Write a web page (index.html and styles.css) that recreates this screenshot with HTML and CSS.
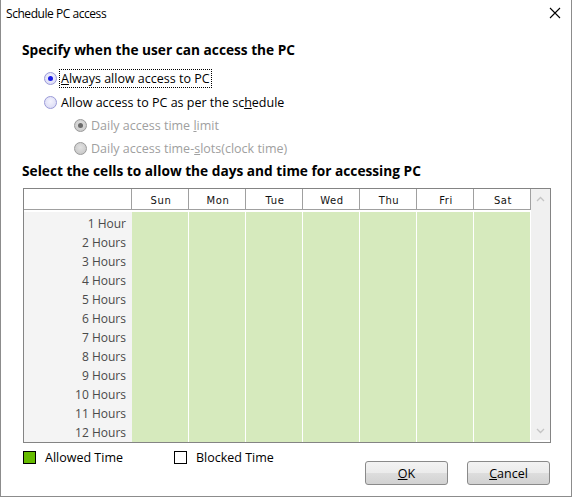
FILE: index.html
```html
<!DOCTYPE html>
<html>
<head>
<meta charset="utf-8">
<link rel="stylesheet" href="styles.css">
</head>
<body>
<div class="dialog">
  <div class="titlebar">
    <span class="title">Schedule PC access</span>
    <svg class="close" width="12" height="12" viewBox="0 0 12 12"><path d="M1 1L11 11M11 1L1 11" stroke="#000" stroke-width="1.1" fill="none"/></svg>
  </div>
  <div class="content">
    <h2 class="heading h1">Specify when the user can access the PC</h2>
    <div class="options">
      <label class="opt o1"><span class="radio checked"></span><span class="focus"><u>A</u>lways allow access to PC</span></label>
      <label class="opt o2"><span class="radio"></span><span>Allow access to PC as per the sc<u>h</u>edule</span></label>
      <label class="opt sub o3 disabled"><span class="radio checked"></span><span>Daily access time <u>l</u>imit</span></label>
      <label class="opt sub o4 disabled"><span class="radio"></span><span>Daily access time-<u>s</u>lots(clock time)</span></label>
    </div>
    <h2 class="heading h2">Select the cells to allow the days and time for accessing PC</h2>
    <div class="grid-wrap">
      <div class="grid">
        <div class="hdr corner"></div>
        <div class="hdr">Sun</div><div class="hdr">Mon</div><div class="hdr">Tue</div><div class="hdr">Wed</div><div class="hdr">Thu</div><div class="hdr">Fri</div><div class="hdr">Sat</div>
        <div class="gap"></div>
      </div>
      <div class="rows" id="rows"></div>
      <div class="scrollbar">
        <svg width="9" height="6" viewBox="0 0 9 6"><path d="M1 5L4.5 1.5L8 5" stroke="#c4c4c4" stroke-width="1.3" fill="none"/></svg>
        <svg width="9" height="6" viewBox="0 0 9 6"><path d="M1 1L4.5 4.5L8 1" stroke="#c4c4c4" stroke-width="1.3" fill="none"/></svg>
      </div>
    </div>
    <div class="footer">
      <div class="legend">
        <div class="litem"><span class="swatch allowed"></span><span class="ltext">Allowed Time</span></div>
        <div class="litem"><span class="swatch blocked"></span><span class="ltext">Blocked Time</span></div>
      </div>
      <div class="buttons">
        <button class="btn"><u>O</u>K</button>
        <button class="btn"><u>C</u>ancel</button>
      </div>
    </div>
  </div>
</div>
<script src="script.js"></script>
</body>
</html>
```

FILE: script.js
```js
const rows = document.getElementById('rows');
for (let i = 1; i <= 12; i++) {
  const r = document.createElement('div');
  r.className = 'row';
  const l = document.createElement('div');
  l.className = 'rlabel';
  l.textContent = i + (i === 1 ? ' Hour' : ' Hours');
  r.appendChild(l);
  for (let d = 0; d < 7; d++) {
    const c = document.createElement('div');
    c.className = 'cell';
    r.appendChild(c);
  }
  rows.appendChild(r);
}
```

FILE: styles.css
```css
* { box-sizing: border-box; }
html, body { margin: 0; padding: 0; background: #fff; }
body { font-family: "Open Sans", "Noto Sans", sans-serif; font-size: 12.5px; color: #000; }
.dialog {
  width: 572px; height: 497px;
  border: 1px solid #8c8c8c;
  border-top: none;
  display: flex; flex-direction: column;
}
.titlebar {
  height: 27px; display: flex; align-items: center; justify-content: space-between;
  padding: 0 10px 1px 5px; flex: none;
}
.title { font-size: 12px; letter-spacing: -0.45px; }
.content { padding: 0 21px 0 21px; display: flex; flex-direction: column; }
.heading { margin: 0; font-size: 13.7px; font-weight: bold; line-height: 18px; height: 18px; }
.h1 { margin-top: 14px; }
.options { display: flex; flex-direction: column; margin-top: 7px; }
.opt { display: flex; align-items: center; height: 24px; gap: 4px; padding-left: 22px; }
.o3 { height: 23px; }
.o4 { height: 22px; }
.opt.sub { padding-left: 52px; }
.opt.disabled { color: #a0a0a0; }
.focus { outline: 1px dotted #000; outline-offset: 1px; line-height: 15px; }
.radio {
  width: 13px; height: 13px; border-radius: 50%;
  border: 1px solid #9a9ad8;
  background: radial-gradient(circle at 50% 40%, #f4f4fe 0%, #d6d6f2 100%);
  display: inline-flex; align-items: center; justify-content: center; flex: none;
}
.radio.checked::after { content: ""; width: 5px; height: 5px; border-radius: 50%; background: #1a1ae6; }
.disabled .radio { border-color: #9a9a9a; background: radial-gradient(circle at 50% 40%, #e2e2e2 0%, #c2c2c2 100%); }
.disabled .radio.checked::after { background: #6a6a6a; }
.h2 { margin-top: 3px; }
.grid-wrap {
  margin-top: 8px; margin-left: 1px;
  width: 528px; height: 255px;
  border: 1px solid #848484;
  display: grid;
  grid-template-columns: 507px 19px;
  grid-template-rows: 23px 228px;
}
.grid {
  display: grid; grid-template-columns: 108px repeat(7, 57px);
  grid-template-rows: 21px 2px;
  grid-column: 1; grid-row: 1;
}
.hdr {
  border-right: 1px solid #a0a0a0; border-bottom: 1px solid #a0a0a0;
  display: flex; align-items: center; justify-content: center;
  font-family: "DejaVu Sans", sans-serif; font-size: 10px; letter-spacing: 0.6px; color: #111;
  padding: 2px 0 0 2px;
}
.gap { grid-column: 1 / -1; background: #fff; }
.rows { grid-column: 1; grid-row: 2; display: flex; flex-direction: column; }
.row { display: grid; grid-template-columns: 108px repeat(7, 57px); height: 19px; }
.rlabel {
  background: #f4f4f4; border-bottom: 1px solid #fff;
  text-align: right; padding: 3px 6px 0 0; color: #4a4a4a; line-height: 18px;
  font-size: 12px; overflow: visible;
}
.cell { background: #d6eabd; border-right: 1px solid #fff; border-bottom: 1px solid #fff; }
.row:last-child .cell, .row:last-child .rlabel { border-bottom: none; }
.scrollbar {
  grid-column: 2; grid-row: 1 / 3; background: #f0f0f0;
  display: flex; flex-direction: column; justify-content: space-between; align-items: center;
  padding: 7px 0 6px;
}
.footer { display: flex; justify-content: space-between; align-items: flex-start; }
.legend { display: grid; grid-template-columns: 151px auto; height: 16px; margin-top: 6px; padding-left: 1px; }
.litem { display: flex; align-items: center; }
.swatch { width: 13px; height: 13px; border: 1px solid #000; flex: none; }
.allowed { background: #66bb00; }
.blocked { background: #fff; }
.ltext { margin-left: 9px; }
.buttons { display: flex; gap: 19px; margin-top: 18px; }
.btn {
  width: 83px; height: 24px; border: 1px solid #8a8a8a; border-radius: 3px;
  background: linear-gradient(#f3f3f3 0%, #ebebeb 50%, #dddddd 51%, #d2d2d2 100%);
  font-family: "Open Sans", sans-serif; font-size: 12.5px; color: #000; padding: 0;
}
```
